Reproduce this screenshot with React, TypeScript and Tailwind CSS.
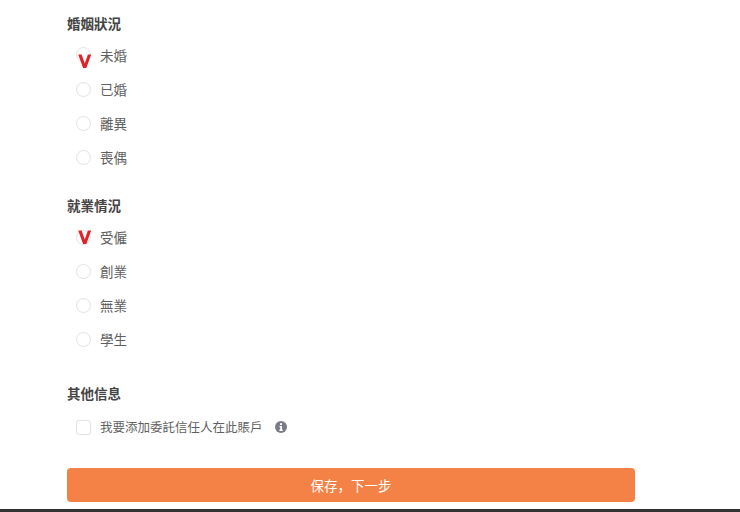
import React from "react";

const font = { fontFamily: '"Noto Sans CJK TC", "Noto Sans CJK SC", sans-serif' };
const scFont = { fontFamily: '"Noto Sans CJK SC", sans-serif' };

function Check({ className }: { className: string }) {
  return (
    <svg className={`absolute left-[0px] ${className}`} width="15" height="16" viewBox="0 0 15 16">
      <path d="M1.2 1.5 L4.6 1.5 L7.8 10.6 L10.9 1.5 L14.2 1.5 L9.3 15 L6.1 15 Z" fill="#e2202a" />
    </svg>
  );
}

function Radio({ label, check }: { label: string; check?: "high" | "low" }) {
  return (
    <div className="flex h-[34px] items-center pl-[9px]">
      <span
        className={`relative mr-[9px] h-[15px] w-[15px] shrink-0 rounded-full border border-[#e2e2e2] bg-white ${
          check === "low" ? "-translate-y-px" : ""
        }`}
      >
        {check === "low" && <Check className="top-[5px]" />}
        {check === "high" && <Check className="top-[-2px]" />}
      </span>
      <span className="text-[13.5px] text-[#5f5f5f]">{label}</span>
    </div>
  );
}

function Heading({ children, className }: { children: React.ReactNode; className?: string }) {
  return <div className={`text-[13.5px] leading-5 font-bold text-[#444] ${className ?? ""}`}>{children}</div>;
}

export default function App() {
  return (
    <div className="flex h-[512px] w-[740px] flex-col overflow-hidden bg-white" style={font}>
      <div className="flex-1 pl-[67px]">
        <div className="w-[568px]">
          <Heading className="mt-[13px]">婚姻狀況</Heading>
          <div className="mt-[5px]">
            <Radio label="未婚" check="low" />
            <Radio label="已婚" />
            <Radio label="離異" />
            <Radio label="喪偶" />
          </div>
          <Heading className="mt-[21px]">就業情況</Heading>
          <div className="mt-[5px]">
            <Radio label="受僱" check="high" />
            <Radio label="創業" />
            <Radio label="無業" />
            <Radio label="學生" />
          </div>
          <Heading className="mt-[27px]">其他信息</Heading>
          <div className="mt-[16px] flex h-4 items-center pl-[9px]">
            <span className="mr-[9px] h-[15px] w-[15px] shrink-0 rounded-[3px] border border-[#e2e2e2] bg-white" />
            <span className="text-[12.5px] text-[#5f5f5f]">我要添加委託信任人在此賬戶</span>
            <svg className="ml-[12px]" width="12" height="12" viewBox="0 0 12 12">
              <circle cx="6" cy="6" r="6" fill="#7b7b88" />
              <rect x="5" y="2.2" width="2" height="1.8" fill="#fff" />
              <path d="M4.5 5h2.5v3.6h.7V10H4.4V8.6h.8V6.2h-.7z" fill="#fff" />
            </svg>
          </div>
          <button className="mt-[33px] flex h-[34px] w-full items-center justify-center rounded-[4px] bg-[#f48145] text-[13.5px] text-white" style={scFont}>
            保存，下一步
          </button>
        </div>
      </div>
      <div className="h-[3px] bg-[#333]" />
    </div>
  );
}
